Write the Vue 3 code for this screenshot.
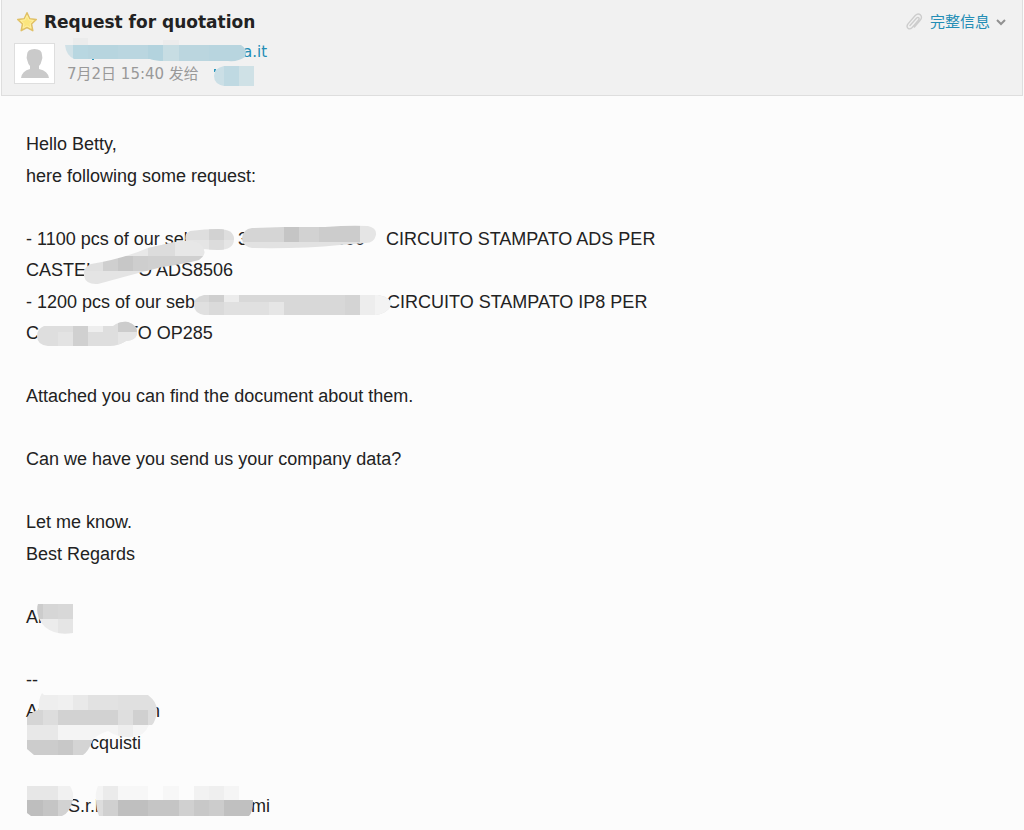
<script setup>
const senderTiles = [
  [73, 38, 15, 7, '#ebecec'], [163, 40, 16, 6, '#ececec'],
  [58, 45, 15, 17, '#d0e1e7'], [73, 45, 15, 17, '#b8d7e1'], [88, 45, 30, 17, '#b7d5df'],
  [118, 45, 30, 17, '#bad6e0'], [148, 45, 15, 17, '#b3d3de'], [163, 45, 16, 17, '#c7dde3'],
  [179, 45, 30, 17, '#bbd6df'], [209, 45, 40, 17, '#b8d5df'],
  [213, 65, 11, 22, '#cbdfe6'], [224, 65, 15, 22, '#bfd9e2'], [239, 65, 15, 22, '#cfe1e6'],
]

const bodyTiles = {
  a: [[180, 226, 60, 14, '#dedede'], [209, 226, 15, 14, '#d2d2d2'], [180, 240, 60, 12, '#e5e5e5'], [209, 240, 15, 12, '#dcdcdc']],
  b: [[240, 224, 44, 18, '#d5d5d5'], [284, 224, 15, 18, '#c5c5c5'], [299, 224, 20, 18, '#d2d2d2'], [319, 224, 41, 18, '#cccccc'], [360, 224, 20, 24, '#e5e5e5'], [240, 242, 120, 10, '#e2e2e2']],
  c: [[82, 241, 130, 15, '#e8e8e8'], [148, 240, 27, 16, '#dcdcdc'], [175, 240, 35, 16, '#e7e7e7'], [103, 256, 15, 15, '#cfcfcf'], [118, 256, 15, 15, '#c7c7c7'], [133, 256, 15, 15, '#cecece'], [148, 256, 57, 15, '#d0d0d0'], [82, 256, 21, 15, '#e0e0e0'], [82, 271, 100, 20, '#e4e4e4']],
  d: [[190, 292, 200, 10, '#d8d8d8'], [190, 302, 200, 16, '#e0e0e0'], [209, 294, 15, 8, '#cfcfcf'], [224, 294, 15, 8, '#ececec'], [209, 302, 15, 16, '#dadada'], [269, 302, 15, 16, '#e6e6e6'], [284, 294, 76, 24, '#d8d8d8'], [345, 294, 15, 24, '#d4d4d4'], [360, 294, 15, 24, '#ededed'], [375, 294, 18, 24, '#f3f3f3']],
  e: [[34, 321, 104, 28, '#dedede'], [58, 332, 15, 18, '#e3e3e3'], [73, 326, 15, 24, '#d0d0d0'], [88, 325, 15, 7, '#eeeeee'], [118, 321, 20, 11, '#cccccc'], [118, 332, 20, 18, '#e5e5e5']],
  f: [[37, 603, 21, 16, '#d6d6d6'], [37, 603, 6, 16, '#cccccc'], [58, 603, 15, 16, '#d8d8d8'], [37, 619, 21, 16, '#ececec'], [58, 619, 15, 16, '#e5e5e5']],
  g: [[27, 692, 31, 18, '#eeeeee'], [58, 695, 15, 15, '#f0f0f0'], [73, 695, 15, 15, '#e9e9e9'], [88, 695, 30, 15, '#e2e2e2'], [118, 694, 40, 16, '#e0e0e0'],
    [27, 710, 16, 15, '#d5d5d5'], [43, 710, 15, 15, '#dddddd'], [58, 710, 60, 15, '#d2d2d2'], [118, 710, 15, 15, '#dedede'], [133, 710, 15, 15, '#d0d0d0'], [148, 710, 10, 15, '#dddddd'],
    [27, 725, 31, 15, '#e8e8e8'], [58, 725, 60, 15, '#f4f4f4'], [118, 725, 15, 15, '#eeeeee'], [133, 725, 20, 15, '#f5f5f5'],
    [27, 740, 31, 16, '#cccccc'], [58, 740, 15, 16, '#c8c8c8'], [73, 740, 25, 16, '#d4d4d4']],
  h: [[27, 785, 31, 15, '#e7e7e7'], [58, 785, 16, 15, '#f1f1f1'], [27, 800, 16, 16, '#bebebe'], [43, 800, 15, 16, '#c5c5c5'], [58, 800, 16, 16, '#d2d2d2'],
    [94, 785, 24, 15, '#f4f4f4'], [103, 785, 15, 15, '#ebebeb'], [118, 785, 30, 15, '#f7f7f7'], [163, 785, 16, 15, '#f7f7f7'], [194, 785, 15, 15, '#f2f2f2'], [209, 785, 15, 15, '#efefef'], [224, 785, 15, 15, '#f5f5f5'],
    [94, 800, 9, 16, '#dddddd'], [103, 800, 15, 16, '#d0d0d0'], [118, 800, 30, 16, '#bfbfbf'], [148, 800, 31, 16, '#c5c5c5'], [179, 800, 15, 16, '#d0d0d0'], [194, 800, 15, 16, '#c8c8c8'], [209, 800, 15, 16, '#cccccc'], [224, 800, 29, 16, '#c0c0c0']],
}

const outlines = {
  a: 'M190 231 Q205 229 218 229 Q234 229 234 239 Q234 250 218 250 Q200 249 188 248 Q184 240 186 234Z',
  b: 'M252 228 L284 227 L325 227 Q350 225 368 226 Q377 228 376 235 Q374 243 366 243 L340 245 Q300 249 252 248 Q242 246 242 238 Q243 229 252 228Z',
  c: 'M91 264 Q122 259 148 248 L175 242 Q195 239 202 246 Q208 254 199 260 Q184 264 162 267 Q130 275 98 284 Q86 285 84 276 Q83 267 91 264Z',
  d: 'M204 295 H378 Q392 298 391 305 Q388 313 376 315 H204 Q194 313 194 305 Q194 297 204 295Z',
  e: 'M44 326 H113 Q120 321 128 322 Q138 325 137 334 Q136 340 126 341 Q118 346 110 346 H48 Q37 345 37 336 Q37 329 44 326Z',
  f: 'M38 604 H73 V633 Q56 636 45 627 Q35 617 38 604Z',
  g: 'M42 693 L44 695 H148 Q157 702 157 710 Q156 721 152 725 H149 Q144 737 132 737 Q118 738 108 731 Q96 735 93 740 Q88 752 83 755 H34 L27 749 V717 Q34 710 39 710 Q38 699 42 693Z',
  h: 'M27 786 H70 Q74 792 73 800 Q69 814 62 816 H31 L27 813Z M98 786 H239 V800 H253 Q253 812 249 816 H99 Q96 809 96 800 Q95 792 98 786Z',
}
</script>

<template>
  <main class="mail">
    <header class="head">
      <div class="subject">
        <svg class="star" viewBox="0 0 22 22" aria-hidden="true">
          <path d="M11 1.8 13.8 7.7 20.3 8.5 15.5 13 16.8 19.7 11 16.5 5.2 19.7 6.5 13 1.7 8.5 8.2 7.7Z" fill="#fbe57d" stroke="#e0c067" stroke-width="1.5" stroke-linejoin="round" />
          <path d="M11 4.6 12.9 8.9 17.4 9.5 14 12.6 14.9 17 11 14.9 7.1 17 8 12.6 4.6 9.5 9.1 8.9Z" fill="none" stroke="#fff0a0" stroke-width="1" />
        </svg>
        <h1>Request for quotation</h1>
        <div class="tools">
          <svg class="clip" viewBox="0 0 18 20" aria-hidden="true">
            <path d="M5 13.5 11.4 6.2Q13.1 4.6 14 6.1 14.4 7.2 13.4 8.3L7.2 15.5Q5 17.8 3 16.2 1 14.3 3.2 11.6L10.2 3.6Q13 .9 15.4 2.9 17.6 5 15.2 8.2L9.4 15" fill="none" stroke="#cdcdcd" stroke-width="1.4" stroke-linecap="round" />
          </svg>
          <a href="#details">完整信息</a>
          <svg class="chevron" viewBox="0 0 12 8" aria-hidden="true"><path d="M2 2 6 6 10 2" fill="none" stroke="#919191" stroke-width="2" /></svg>
        </div>
      </div>
      <div class="meta">
        <svg class="avatar" viewBox="0 0 41 41" role="img" aria-label="Sender">
          <rect x=".5" y=".5" width="40" height="40" fill="#fff" stroke="#dedede" />
          <path d="M13 12Q13 6 20.5 6Q28 6 28 12Q29 15 27.5 18Q27 21 25 23V26Q34 28 35 35H7Q8 28 16 26V23Q14 21 13.5 18Q12 15 13 12Z" fill="#cacaca" />
        </svg>
        <div class="who">
          <a class="from" href="#sender">a.it</a>
          <p class="date">7月2日 15:40 发给</p>
        </div>
      </div>
      <svg class="mask" width="280" height="96" aria-hidden="true">
        <defs><clipPath id="sender"><path d="M65 45H73V38H88V45H163V40H179V45H241Q248 49 245 57Q238 62 228 61H160Q152 60 150 59H74Q66 55 65 45ZM224 66H254V86H224Q214 84 214 76Q214 68 224 66Z" /></clipPath></defs>
        <path d="M92 59h2v1h-2zM214 69h2v3h-2z" fill="#2c97bd" />
        <g clip-path="url(#sender)"><rect v-for="(t, i) in senderTiles" :key="i" :x="t[0]" :y="t[1]" :width="t[2]" :height="t[3]" :fill="t[4]" /></g>
      </svg>
    </header>

    <article class="body">
      <p>Hello Betty,<br>here following some request:</p>
      <p>
        <span class="gap order">- 1100 pcs of our seb</span><span class="gap code"><span>3</span><span>500</span></span>CIRCUITO STAMPATO ADS PER<br>
        <span class="gap place">CASTEL</span>O ADS8506<br>
        <span class="gap item">- 1200 pcs of our seb</span>CIRCUITO STAMPATO IP8 PER<br>
        <span class="gap town">C</span>TO OP285
      </p>
      <p>Attached you can find the document about them.</p>
      <p>Can we have you send us your company data?</p>
      <p>Let me know.<br>Best Regards</p>
      <p>Al</p>
      <p>
        --<br>
        <span class="gap name">As</span>n<br>
        <span class="gap role"></span>cquisti
      </p>
      <p><span class="gap firm"></span><span class="gap legal">S.r.l</span>mi</p>
      <svg class="mask" viewBox="0 96 420 734" width="420" height="734" aria-hidden="true">
        <defs><clipPath v-for="(d, k) in outlines" :id="'area-' + k" :key="k"><path :d="d" /></clipPath></defs>
        <g v-for="(tiles, k) in bodyTiles" :key="k" :clip-path="`url(#area-${k})`">
          <rect v-for="(t, i) in tiles" :key="i" :x="t[0]" :y="t[1]" :width="t[2]" :height="t[3]" :fill="t[4]" />
        </g>
      </svg>
    </article>
  </main>
</template>

<style>
body { margin: 0; background: #fcfcfc; overflow-x: hidden; }
</style>

<style scoped>
.mail { font-family: "Liberation Sans", "Noto Sans CJK SC", sans-serif; color: #222; }
.head {
  position: relative;
  margin: 0 1px;
  padding: 10px 13px 11px;
  background: #f1f1f1;
  border: 1px solid #dedede;
  border-top: 0;
  font-family: "DejaVu Sans", "Noto Sans CJK SC", sans-serif;
}
.subject { display: flex; align-items: center; height: 24px; }
.star { width: 22px; height: 22px; margin-left: 1px; }
h1 { flex: 1; margin: 0 0 0 6px; font-size: 17px; line-height: 24px; font-weight: 700; }
.tools { display: flex; align-items: center; margin-right: 2px; }
.tools a { font-size: 15px; line-height: 22px; margin: 0 5px 0 7px; }
a { color: #238db5; text-decoration: none; }
.clip { width: 18px; height: 20px; }
.chevron { width: 12px; height: 8px; }
.meta { display: flex; align-items: flex-end; height: 41px; margin-top: 9px; }
.avatar { width: 41px; height: 41px; margin-left: -1px; }
.who { margin-left: 12px; font-size: 15px; }
.from { display: block; margin-left: 176px; line-height: 20px; }
.date { margin: 2px 0 0; line-height: 20px; color: #999; }
.mask { position: absolute; top: 0; left: 0; pointer-events: none; }
.head .mask { left: -2px; }
.body { position: relative; padding: 33px 26px 0; font-size: 18px; line-height: 1.75; }
.body p { margin: 0 0 1.75em; }
.body p:last-of-type { margin: 0; }
.gap { display: inline-block; white-space: nowrap; }
.order { width: 212px; }
.code { display: inline-flex; justify-content: space-between; width: 127px; margin-right: 21px; }
.place { width: 112px; }
.item { width: 361px; }
.town { width: 101px; }
.name { width: 124px; }
.role { width: 64px; }
.firm { width: 42px; }
.legal { width: 183px; }
</style>
